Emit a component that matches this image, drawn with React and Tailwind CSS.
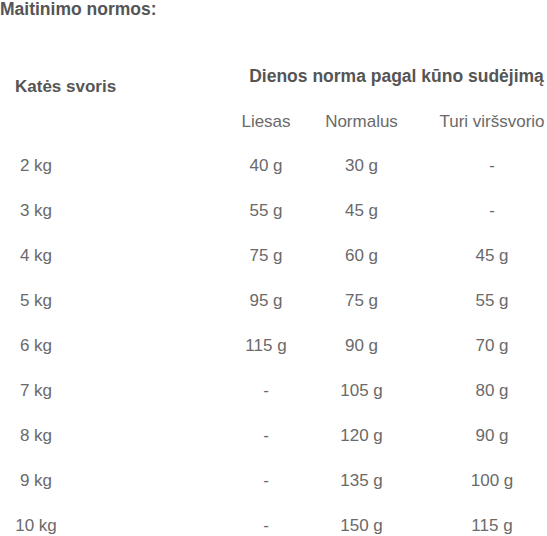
const ROWS = [
  ["2 kg", "40 g", "30 g", "-"],
  ["3 kg", "55 g", "45 g", "-"],
  ["4 kg", "75 g", "60 g", "45 g"],
  ["5 kg", "95 g", "75 g", "55 g"],
  ["6 kg", "115 g", "90 g", "70 g"],
  ["7 kg", "-", "105 g", "80 g"],
  ["8 kg", "-", "120 g", "90 g"],
  ["9 kg", "-", "135 g", "100 g"],
  ["10 kg", "-", "150 g", "115 g"],
];

export default function App() {
  return (
    <div
      className="w-[547px] h-[536px] overflow-hidden bg-white text-[#6a6a6a] text-[17px]"
      style={{ fontFamily: '"Liberation Sans", Arial, sans-serif' }}
    >
      <h3 className="mt-[-1px] h-[19px] leading-[20px] text-[17.5px] font-bold text-[#555555] whitespace-nowrap">
        Maitinimo normos:
      </h3>

      {/* table head */}
      <div className="mt-[42px] h-[83px] flex">
        <div className="w-[231px] shrink-0 pt-[17px] pl-[15px] leading-[20px] font-bold text-[#555555] whitespace-nowrap">
          Katės svoris
        </div>
        <div className="w-[331px] shrink-0 pt-[6px]">
          <div className="leading-[20px] text-[17.5px] font-bold text-[#555555] text-center whitespace-nowrap">
            Dienos norma pagal kūno sudėjimą
          </div>
          <div className="mt-[26px] flex leading-[20px] whitespace-nowrap">
            <div className="w-[70px] text-center">Liesas</div>
            <div className="w-[121px] text-center">Normalus</div>
            <div className="w-[140px] text-center">Turi viršsvorio</div>
          </div>
        </div>
      </div>

      {/* table body */}
      {ROWS.map((r) => (
        <div key={r[0]} className="h-[45px] flex items-center leading-[45px] whitespace-nowrap">
          <div className="w-[231px] shrink-0">
            <div className="w-[72px] text-center">{r[0]}</div>
          </div>
          <div className="w-[70px] shrink-0 text-center">{r[1]}</div>
          <div className="w-[121px] shrink-0 text-center">{r[2]}</div>
          <div className="w-[140px] shrink-0 text-center">{r[3]}</div>
        </div>
      ))}
    </div>
  );
}
